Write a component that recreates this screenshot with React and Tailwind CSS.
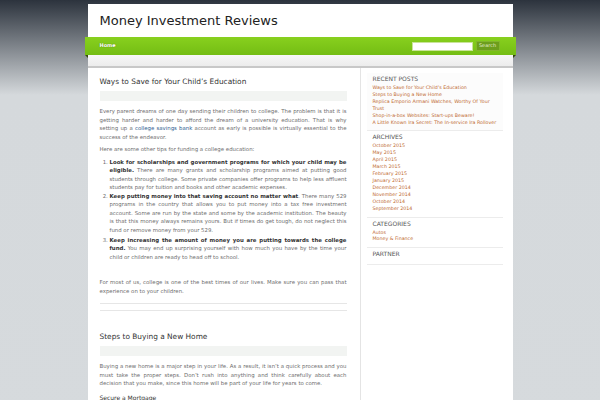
const recent = [
  "Ways to Save for Your Child’s Education",
  "Steps to Buying a New Home",
  "Replica Emporio Armani Watches, Worthy Of Your Trust",
  "Shop-in-a-box Websites: Start-ups Beware!",
  "A Little Known Ira Secret: The In-service Ira Rollover",
];

const archives = [
  "October 2015",
  "May 2015",
  "April 2015",
  "March 2015",
  "February 2015",
  "January 2015",
  "December 2014",
  "November 2014",
  "October 2014",
  "September 2014",
];

const categories = ["Autos", "Money & Finance"];

function Widget({ title, links, first }) {
  return (
    <div
      className={`pt-[2px] pb-[4px] px-[6px] border-b border-[#ececec] ${
        first ? "bg-[#fcfcfc]" : ""
      }`}
    >
      <h3 className="text-[6px] leading-[8px] uppercase text-[#555] mb-[2px]">{title}</h3>
      {links && (
        <ul>
          {links.map((l) => (
            <li key={l} className="text-[4.75px] leading-[6.9px] text-[#c0692f]">
              {l}
            </li>
          ))}
        </ul>
      )}
    </div>
  );
}

function PostHeader({ title }) {
  return (
    <>
      <h2 className="text-[7.4px] leading-[10px] text-[#333]">{title}</h2>
      <div className="h-[10px] mt-[4px] mb-[6px] bg-[#f2f4f2]" />
    </>
  );
}

export default function App() {
  return (
    <div
      className="min-h-screen pt-[4px] bg-[linear-gradient(to_bottom,#2c333d_0px,#d5d9dc_95px,#d6dadd_100%)]"
      style={{ fontFamily: '"DejaVu Sans", Verdana, sans-serif' }}
    >
      <div className="mx-auto w-[425px] bg-white">
        {/* header */}
        <div className="h-[33px] flex items-center pl-[12px]">
          <h1 className="text-[13px] leading-none text-[#222]">Money Investment Reviews</h1>
        </div>

        {/* nav */}
        <div className="relative -mx-[3px] h-[18px] flex items-center justify-between pl-[15px] pr-[16px] bg-[linear-gradient(to_bottom,#88d01e,#74bd14)]">
          <span className="text-[5px] font-bold text-white [text-shadow:0_0_1px_#4a7a0a]">Home</span>
          <div className="flex items-center gap-[3px]">
            <div className="w-[61px] h-[9px] bg-white border border-[#c9e39a]" />
            <div className="w-[24px] h-[10px] bg-[#6c9e1c] border border-[#82b52c] flex items-center justify-center text-[5px] text-[#e4eccf]">
              Search
            </div>
          </div>
          <div className="absolute left-0 top-full w-0 h-0 border-t-[3px] border-l-[3px] border-t-[#34480e] border-l-transparent" />
          <div className="absolute right-0 top-full w-0 h-0 border-t-[3px] border-r-[3px] border-t-[#34480e] border-r-transparent" />
        </div>

        {/* strip */}
        <div className="h-[13px] bg-[linear-gradient(to_bottom,#f7f7f7,#ececec)] border-b-[2px] border-[#c8c8c8]" />

        <div className="flex">
          {/* main */}
          <div className="w-[273px] pl-[12px] pr-[13px] pt-[9px] border-r border-[#e4e4e4] text-[5.4px] leading-[8.5px] text-[#6e6e6e]">
            <PostHeader title="Ways to Save for Your Child’s Education" />
            <p className="text-justify mb-[3.5px]">
              Every parent dreams of one day sending their children to college. The problem is that it
              is getting harder and harder to afford the dream of a university education. That is why
              setting up a <span className="text-[#2d5c8f]">college savings bank</span> account as early
              is possible is virtually essential to the success of the endeavor.
            </p>
            <p className="mb-[4.5px]">Here are some other tips for funding a college education:</p>
            <ol className="list-decimal pl-[10px] text-justify mb-[5px]">
              <li>
                <b className="text-[#333]">
                  Look for scholarships and government programs for which your child may be eligible.
                </b>{" "}
                There are many grants and scholarship programs aimed at putting good students through
                college. Some private companies offer programs to help less affluent students pay for
                tuition and books and other academic expenses.
              </li>
              <li>
                <b className="text-[#333]">Keep putting money into that saving account no matter what</b>.
                There many 529 programs in the country that allows you to put money into a tax free
                investment account. Some are run by the state and some by the academic institution. The
                beauty is that this money always remains yours. But if times do get tough, do not neglect
                this fund or remove money from your 529.
              </li>
              <li className="mt-[1.5px]">
                <b className="text-[#333]">
                  Keep increasing the amount of money you are putting towards the college fund.
                </b>{" "}
                You may end up surprising yourself with how much you have by the time your child or
                children are ready to head off to school.
              </li>
            </ol>
            <p className="mb-[3.5px]">&nbsp;</p>
            <p className="text-justify">
              For most of us, college is one of the best times of our lives. Make sure you can pass that
              experience on to your children.
            </p>
            <div className="mt-[8px] border-t border-[#e6e6e6]" />
            <div className="mt-[6px] border-t border-[#e6e6e6]" />

            <div className="pt-[21px]">
              <PostHeader title="Steps to Buying a New Home" />
              <p className="text-justify">
                Buying a new home is a major step in your life. As a result, it isn’t a quick process and
                you must take the proper steps. Don’t rush into anything and think carefully about each
                decision that you make, since this home will be part of your life for years to come.
              </p>
              <h4 className="mt-[6px] text-[6px] leading-[8.5px] text-[#333]">Secure a Mortgage</h4>
              <p className="h-[40px]" />
            </div>
          </div>

          {/* sidebar */}
          <div className="flex-1 pl-[6px] pr-[10px] pt-[5px]">
            <Widget title="Recent Posts" links={recent} first />
            <Widget title="Archives" links={archives} />
            <Widget title="Categories" links={categories} />
            <Widget title="Partner" />
          </div>
        </div>
      </div>
    </div>
  );
}
